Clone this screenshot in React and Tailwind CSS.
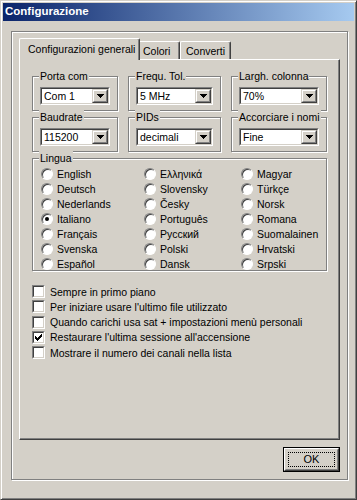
import React from 'react';

const etched = "border border-[#808080] shadow-[inset_1px_1px_0_#fff,1px_1px_0_#fff]";

const Group = ({ label, className = '', children }) => (
  <div className={`relative ${etched} ${className}`}>
    <span className="absolute left-[6px] -top-[8px] bg-[#d4d0c8] px-[1px] leading-[14px] whitespace-nowrap">{label}</span>
    {children}
  </div>
);

const DownArrow = () => (
  <svg width="7" height="4" viewBox="0 0 7 4" shapeRendering="crispEdges">
    <path d="M0 0h7v1H0z M1 1h5v1H1z M2 2h3v1H2z M3 3h1v1H3z" fill="#000" />
  </svg>
);

const Combo = ({ value }) => (
  <div className="h-[18px] w-full border border-[#808080] border-r-white border-b-white">
    <div className="flex h-full border border-[#404040] border-r-[#d4d0c8] border-b-[#d4d0c8] bg-white">
      <span className="flex-1 pl-[2px] leading-[14px]">{value}</span>
      <div className="w-[16px] h-full border border-[#d4d0c8] border-r-[#404040] border-b-[#404040]">
        <div className="flex h-full items-center justify-center border border-white border-r-[#808080] border-b-[#808080] bg-[#d4d0c8]">
          <DownArrow />
        </div>
      </div>
    </div>
  </div>
);

const Radio = ({ label, checked }) => (
  <div className="flex h-[15px] items-center">
    <div className="flex h-[12px] w-[12px] shrink-0 items-center justify-center rounded-full border border-[#808080] border-r-white border-b-white bg-white shadow-[inset_1px_1px_0_#404040]">
      {checked && <div className="h-[4px] w-[4px] rounded-full bg-black" />}
    </div>
    <span className="ml-[4px] whitespace-nowrap leading-[14px]">{label}</span>
  </div>
);

const Check = ({ label, checked }) => (
  <div className="flex h-[15.25px] items-center">
    <div className="h-[13px] w-[13px] shrink-0 border border-[#808080] border-r-white border-b-white">
      <div className="flex h-full items-center justify-center border border-[#404040] border-r-[#d4d0c8] border-b-[#d4d0c8] bg-white">
        {checked && (
          <svg width="7" height="7" viewBox="0 0 7 7" shapeRendering="crispEdges">
            <path d="M6 0h1v1H6z M5 1h2v1H5z M0 2h1v1H0z M4 2h3v1H4z M0 3h2v1H0z M3 3h3v1H3z M0 4h5v1H0z M1 5h3v1H1z M2 6h1v1H2z" fill="#000" />
          </svg>
        )}
      </div>
    </div>
    <span className="ml-[5px] whitespace-nowrap leading-[14px]">{label}</span>
  </div>
);

const langs = [
  ['English', 'Ελληνικά', 'Magyar'],
  ['Deutsch', 'Slovensky', 'Türkçe'],
  ['Nederlands', 'Česky', 'Norsk'],
  ['Italiano', 'Português', 'Romana'],
  ['Français', 'Русский', 'Suomalainen'],
  ['Svenska', 'Polski', 'Hrvatski'],
  ['Español', 'Dansk', 'Srpski'],
];

const options = [
  ['Sempre in primo piano', false],
  ["Per iniziare usare l'ultimo file utilizzato", false],
  ['Quando carichi usa sat + impostazioni menù personali', false],
  ["Restaurare l'ultima sessione all'accensione", true],
  ['Mostrare il numero dei canali nella lista', false],
];

export default function App() {
  return (
    <div className="h-[500px] w-[357px] overflow-hidden border border-[#d4d0c8] border-r-[#404040] border-b-[#404040] bg-[#d4d0c8] p-[2px] font-['Liberation_Sans',Arial,sans-serif] text-[10.5px] text-black shadow-[inset_1px_1px_0_#fff,inset_-1px_-1px_0_#808080]">
      {/* title bar */}
      <div className="flex h-[18px] items-center bg-linear-to-r/srgb from-[#0a246a] to-[#a6caf0] pl-[2px] text-[11.5px] font-bold text-white">
        Configurazione
      </div>

      <div className={`ml-[8px] mt-[10px] h-[449px] w-[337px] ${etched} pl-[7px] pt-[6px]`}>
        {/* tabs */}
        <div className="flex h-[21px] items-end">
          <div className="relative z-10 -mb-[1px] flex h-[22px] w-[121px] items-start border border-b-0 border-white border-r-[#404040] pl-[8px] pt-[3px] shadow-[inset_-1px_0_0_#808080] rounded-t-[2px] bg-[#d4d0c8]">
            <span className="leading-[14px] whitespace-nowrap">Configurazioni generali</span>
          </div>
          <div className="flex h-[18px] w-[40px] items-start border border-b-0 border-white border-l-0 border-r-[#404040] pl-[3px] pt-[2px] shadow-[inset_-1px_0_0_#808080] rounded-tr-[2px]">
            <span className="leading-[14px]">Colori</span>
          </div>
          <div className="flex h-[18px] w-[51px] items-start border border-b-0 border-white border-r-[#404040] pl-[5px] pt-[2px] shadow-[inset_-1px_0_0_#808080] rounded-t-[2px]">
            <span className="leading-[14px]">Converti</span>
          </div>
        </div>

        {/* panel */}
        <div className="h-[381px] w-[321px] border border-white border-r-[#404040] border-b-[#404040] pl-[12px] pt-[16px] shadow-[inset_-1px_-1px_0_#808080]">
          <div className="flex gap-[10px]">
            <Group label="Porta com" className="h-[35px] w-[86px] px-[7px] pt-[10px]">
              <Combo value="Com 1" />
            </Group>
            <Group label="Frequ. Tol." className="h-[35px] w-[93px] px-[7px] pt-[10px]">
              <Combo value="5 MHz" />
            </Group>
            <Group label="Largh. colonna" className="h-[35px] w-[96px] px-[7px] pt-[10px]">
              <Combo value="70%" />
            </Group>
          </div>
          <div className="mt-[6px] flex gap-[10px]">
            <Group label="Baudrate" className="h-[35px] w-[86px] px-[7px] pt-[10px]">
              <Combo value="115200" />
            </Group>
            <Group label="PIDs" className="h-[35px] w-[93px] px-[7px] pt-[10px]">
              <Combo value="decimali" />
            </Group>
            <Group label="Accorciare i nomi" className="h-[35px] w-[96px] px-[7px] pt-[10px]">
              <Combo value="Fine" />
            </Group>
          </div>

          <Group label="Lingua" className="mt-[6px] h-[113px] w-[295px] pl-[8px] pt-[7px]">
            <div className="grid grid-cols-[103px_97px_1fr]">
              {langs.map((row) =>
                row.map((l) => <Radio key={l} label={l} checked={l === 'Italiano'} />)
              )}
            </div>
          </Group>

          <div className="mt-[13px] flex flex-col">
            {options.map(([label, checked]) => (
              <Check key={label} label={label} checked={checked} />
            ))}
          </div>
        </div>

        {/* buttons */}
        <div className="mt-[7px] flex w-[321px] justify-end">
          <div className="h-[25px] w-[57px] border border-black">
            <div className="h-full border border-white border-r-[#404040] border-b-[#404040]">
              <div className="h-full border border-[#d4d0c8] border-r-[#808080] border-b-[#808080] p-[2px]">
                <div className="flex h-full items-center justify-center border border-dotted border-black text-[11px]">
                  OK
                </div>
              </div>
            </div>
          </div>
        </div>
      </div>
    </div>
  );
}
